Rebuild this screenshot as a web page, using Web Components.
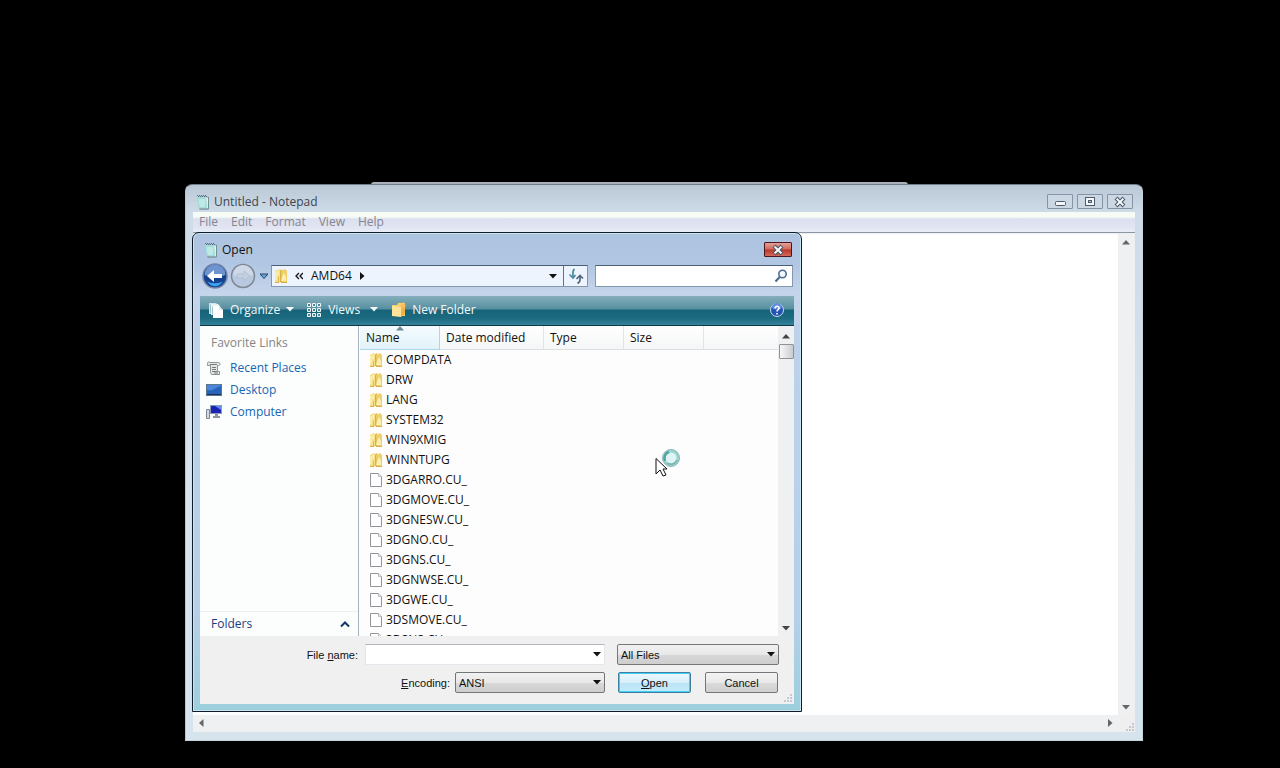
<!DOCTYPE html>
<html lang="en">
<head>
<meta charset="utf-8">
<title>Untitled - Notepad</title>
<style>
  html, body { height: 100%; }
  body { margin: 0; background: #000; font: 12px/16px "Open Sans", "Noto Sans", sans-serif; color: #111; overflow: hidden; }
</style>
</head>
<body>
<desk-top>
  <note-window></note-window>
  <open-dialog></open-dialog>
  <busy-cursor></busy-cursor>
</desk-top>

<script>
const ICONS = {
  notepad: [16, 16, `<path d="M4 3h9.500v12H5z" fill="#dcefee" stroke="#8ba4ab"/><path d="M2 3h9l1 11H4z" fill="#a3dcd8"/><path d="M4 6h6M4 8h6M4 10h6M5 12h5" stroke="#d9f8f4"/><path d="M2 1.500h10M3 2.500h10" stroke="#536f80" stroke-dasharray="1 1"/><path d="M13.500 3v12h-9" fill="none" stroke="#6f9299"/>`],
  folder: [14, 16, `<path d="M1 3l4-2 2 1v12l-3 1-3-1z" fill="#f6e08a"/><path d="M6 3l2-2v13H6z" fill="#d9b04a"/><path d="M7 3l4-2 2 2v11l-5 1z" fill="#f0cf66"/><path d="M8 9l2-4 2 4v4H7z" fill="#fcefb0"/><path d="M2 4v8M4 3v4" stroke="#fff8d0"/><path d="M1 14.500h4M7 14.500h6" stroke="#d8ae4c"/><path d="M4.500 9v5" stroke="#e2b94f"/>`],
  file: [14, 16, `<path d="M1.500 1.500h8l3 3v10h-11z" fill="#fff" stroke="#92959a"/><path d="M9.500 1.500v3h3" fill="#eee" stroke="#b7bbc0"/>`],
  recent: [16, 16, `<path d="M1.500 3.500c0-2 2-2 2-1h9c2 0 2 3 0 3h-1v6h2v3h-8l-1-2v-7h-3z" fill="#e4e7e5" stroke="#8c9590"/><path d="M4 4.500h7M6 7.500h4M6 9.500h4M6 11.500h5M8 13h4" stroke="#737d79"/>`],
  desktop: [16, 16, `<rect x=".5" y="2.500" width="15" height="11" fill="#2763b8" stroke="#5e7790"/><path d="M1 8c5 2 9-3 14-4V3H1z" fill="#4b86da"/><path d="M1 12.500h14" stroke="#1b2c55"/>`],
  computer: [16, 16, `<path d="M.5 5.500h3v9h-3z" fill="#d5d9dc" stroke="#7d878e"/><rect x="4.500" y="1.500" width="11" height="8" fill="#1b22b4" stroke="#8d9db9"/><path d="M9 2h6v4z" fill="#5a8cf0"/><path d="M9 10h3v2h2v2H7v-2h2z" fill="#8e979e"/>`],
  organize: [16, 16, `<path d="M1 1h7l2 2v9H1z" fill="#cfe3e8"/><path d="M3 2h7l2 2v9H3z" fill="#e6f2f4"/><path d="M2.500 2.500v9M4.500 4.500v8" stroke="#a5c6cf"/><path d="M5 4h6l4 4v8H5z" fill="#fff"/><path d="M11 4v4h4" fill="#dbe9ec"/>`],
  views: [16, 16, `<path fill="#4d8495" stroke="#f2f9fa" d="M1.500 1.500h3v3h-3zM6.500 1.500h3v3h-3zM11.500 1.500h3v3h-3zM1.500 6.500h3v3h-3zM6.500 6.500h3v3h-3zM11.500 6.500h3v3h-3zM1.500 11.500h3v3h-3zM6.500 11.500h3v3h-3zM11.500 11.500h3v3h-3z"/>`],
  newfolder: [16, 16, `<path d="M1 3h5l1-2h7v13H1z" fill="#f6d16a"/><path d="M1 4l9 1v10l-9-1z" fill="#ffe398"/><path d="M10 5l4-2v9l-4 3z" fill="#edb548"/><path d="M12 0v7M9 4h6M10 2l4 4M14 2l-4 4" stroke="#ffb95a"/>`],
  help: [16, 16, `<circle cx="8" cy="8" r="6.500" fill="#2453b4" stroke="#c8dcf0"/><path d="M3 6a5 5 0 0 1 10 0c-3 2-7 2-10 0z" fill="#5d8be0"/><path d="M6 6.500c0-3 4.500-2.800 4 0-.2 1.200-2 1.400-2 3M8 11v1.500" fill="none" stroke="#fff" stroke-width="1.600"/>`],
  back: [26, 26, `<circle cx="13" cy="13" r="12" fill="#14408f" stroke="#7484a4" stroke-width="1.500"/><path d="M2.500 12a10.500 10.500 0 0 1 21 0c-6 2-15 2-21 0z" fill="#6e93cf"/><path d="M5 18c4 7 12 7 16 0-4 3-12 3-16 0z" fill="#38a3ee"/><path d="M5 13l7-6v4h8v4h-8v4z" fill="#fff"/>`],
  forward: [26, 26, `<circle cx="13" cy="13" r="11.500" fill="#b8c8de" stroke="#7f8796" stroke-width="1.500"/><path d="M3 12a10 10 0 0 1 20 0c-6 2-14 2-20 0z" fill="#ced8e6"/><path d="M20 13l-6-5v3H7v4h7v3z" fill="#c3d0e2" stroke="#b1c0d3"/>`],
  history: [10, 8, `<path d="M1 2h8L5 6.500z" fill="#6fa3cf" stroke="#1c4672"/>`],
  down: [8, 5, `<path d="M0 0h8L4 4.500z" fill="currentColor"/>`],
  up: [8, 5, `<path d="M0 4.500h8L4 0z" fill="currentColor"/>`],
  left: [5, 8, `<path d="M4.500 0v8L0 4z" fill="currentColor"/>`],
  right: [5, 8, `<path d="M0 0v8l4.500-4z" fill="currentColor"/>`],
  chevrons: [8, 8, `<path d="M4 1L1 4l3 3M8 1L5 4l3 3" fill="none" stroke="#111" stroke-width="1.300"/>`],
  collapse: [10, 8, `<path d="M1 6.500l4-4 4 4" fill="none" stroke="#123a68" stroke-width="2"/>`],
  refresh: [16, 16, `<path d="M6.500 1C4 3 5 5 5 9M1.500 6.500L5 10l2.500-3" fill="none" stroke="#4d8ba0" stroke-width="1.700"/><path d="M9.500 15.500c3-2 2.500-3 2.500-7M8.500 11L12 7.500l3 3" fill="none" stroke="#53677e" stroke-width="1.700"/>`],
  search: [14, 14, `<circle cx="8.500" cy="5" r="3.700" fill="#f3f9fd" stroke="#4d6c92" stroke-width="1.600"/><path d="M5.700 8L1.500 12.500" stroke="#4d6c92" stroke-width="2.200"/>`],
  min: [14, 12, `<rect x="2.500" y="5.500" width="10" height="4" rx="1" fill="#f3f7fb" stroke="#4d5b6b"/>`],
  max: [12, 12, `<rect x="1.500" y="1.500" width="9" height="8" fill="#f3f7fb" stroke="#4d5b6b"/><rect x="4.500" y="4.500" width="3" height="2" fill="#b9c6d5" stroke="#4d5b6b"/>`],
  close: [12, 12, `<path d="M2 2l8 8M10 2l-8 8" stroke="#4d5b6b" stroke-width="4"/><path d="M2.600 2.600l6.800 6.800M9.400 2.600l-6.800 6.800" stroke="#fff" stroke-width="2"/>`],
  grip: [10, 10, `<path d="M7 1h2v2H7zM7 4h2v2H7zM7 7h2v2H7zM4 4h2v2H4zM4 7h2v2H4zM1 7h2v2H1z" fill="#c3c9d3"/>`]
};

function define(name, html, setup) {
  const tpl = document.createElement("template");
  tpl.innerHTML = html;
  customElements.define(name, class extends HTMLElement {
    constructor() {
      super();
      this.attachShadow({ mode: "open" }).append(tpl.content.cloneNode(true));
    }
    connectedCallback() { if (setup) setup(this, this.shadowRoot); }
  });
}

define("ui-icon", `<style>:host{display:inline-flex;flex:none}svg{display:block}</style><span></span>`, (el, root) => {
  const [w, h, body] = ICONS[el.getAttribute("name")];
  root.querySelector("span").innerHTML = `<svg width="${w}" height="${h}" viewBox="0 0 ${w} ${h}" aria-hidden="true">${body}</svg>`;
});

define("scroll-bar", `<style>
  :host{display:flex;flex-direction:column;justify-content:space-between;align-items:center;background:#eff0f1;color:#444;width:16px}
  :host([horizontal]){flex-direction:row;width:auto;height:16px}
  :host([thumb]){box-sizing:border-box;padding-top:2px}
  button{all:unset;display:grid;place-items:center;width:16px;height:16px}
  div{display:flex;flex-direction:column;flex:1}
  i{display:none;box-sizing:border-box;width:15px;height:15px;border:1px solid #8e9196;border-radius:1px;background:linear-gradient(90deg,#f8f8f8,#c9cbce)}
  :host([thumb]) i{display:block}
</style><button aria-label="Scroll back"><ui-icon name="up"></ui-icon></button><div><i></i></div><button aria-label="Scroll forward"><ui-icon name="down"></ui-icon></button>`, (el, root) => {
  if (el.hasAttribute("horizontal")) {
    const [a, b] = root.querySelectorAll("button");
    a.innerHTML = '<ui-icon name="left"></ui-icon>';
    b.innerHTML = '<ui-icon name="right"></ui-icon>';
  }
});

define("desk-top", `<style>
  :host{display:block;position:relative;height:100%;overflow:hidden;background:#000}
  .behind{position:absolute;left:371px;right:372px;top:182px;height:3px;background:#a9b0ba;border-radius:4px 4px 0 0}
</style><div class="behind"></div><slot></slot>`);

define("note-window", `<style>
  :host{position:absolute;left:185px;right:137px;top:184px;bottom:27px;box-sizing:border-box;display:flex;flex-direction:column;padding:0 7px 8px;
    border:1px solid #8c98a6;border-color:#727c89 #c3d4dc #c3d4dc #b9c4d0;border-radius:7px 7px 0 0;background:linear-gradient(#bac8d6,#cfdce8 28px,#d8e3ec 60%,#d5e4ed)}
  header{display:flex;align-items:center;gap:3px;height:27px;padding:6px 2px 0;box-sizing:border-box;color:#3c4550}
  h1{font:inherit;margin:0;flex:1}
  .btns{display:flex;gap:4px;align-self:flex-end;margin-bottom:3px}
  .btns button{box-sizing:border-box;width:26px;height:15px;padding:0;display:grid;place-items:center;background:#cbd7e3;border:1px solid #8593a5;border-radius:1px}
  nav{display:flex;gap:13px;height:20px;padding:0 6px;box-sizing:border-box;background:linear-gradient(#f7fbf5 5px,#dcdff0 7px,#e1e4f1 15px,#e9edf6)}
  nav button{all:unset;align-self:flex-start;margin-top:2px;color:#85858f}
  .client{flex:1;display:grid;grid-template-columns:1fr 17px;grid-template-rows:1fr 17px;border-top:1px solid #8c97a5;background:#efefef;padding:1px 0 0;min-height:0}
  textarea{border:0;margin:0;padding:0;resize:none;outline:0;background:#fff}
  .client>scroll-bar{color:#666}
  .corner{align-self:end;justify-self:end}
</style>
<header><ui-icon name="notepad"></ui-icon><h1>Untitled - Notepad</h1>
<div class="btns"><button aria-label="Minimize"><ui-icon name="min"></ui-icon></button><button aria-label="Maximize"><ui-icon name="max"></ui-icon></button><button aria-label="Close"><ui-icon name="close"></ui-icon></button></div></header>
<nav><button>File</button><button>Edit</button><button>Format</button><button>View</button><button>Help</button></nav>
<div class="client"><textarea aria-label="Document"></textarea><scroll-bar></scroll-bar><scroll-bar horizontal></scroll-bar><ui-icon class="corner" name="grip"></ui-icon></div>`);

define("address-bar", `<style>
  :host{display:flex;align-items:center;height:30px;padding:0 1px 0 2px}
  button{all:unset;display:grid;place-items:center}
  .back,.fwd{width:26px;height:26px}
  .fwd{margin-left:2px}.hist{width:15px}
  .path{flex:1;display:flex;align-items:center;height:22px;box-sizing:border-box;background:#edf4fd;border:1px solid #8397ae;border-top-color:#4a6076}
  .path>.place{margin:0 7px 0 2px}
  .crumb{padding:0 8px}
  .grow{flex:1}
  .drop{width:20px}.ref{width:23px;height:20px;border-left:1px solid #5f7489}
  label{display:flex;align-items:center;margin-left:7px;width:198px;height:22px;box-sizing:border-box;background:#fff;border:1px solid #8397ae;border-top-color:#4a6076;padding-right:4px}
  input{all:unset;flex:1;min-width:0}
</style>
<button class="back" aria-label="Back"><ui-icon name="back"></ui-icon></button><button class="fwd" aria-label="Forward"><ui-icon name="forward"></ui-icon></button><button class="hist" aria-label="Recent pages"><ui-icon name="history"></ui-icon></button>
<div class="path"><ui-icon class="place" name="folder"></ui-icon><ui-icon name="chevrons"></ui-icon><button class="crumb">AMD64</button><ui-icon name="right"></ui-icon><span class="grow"></span><button class="drop" aria-label="Previous locations"><ui-icon name="down"></ui-icon></button><button class="ref" aria-label="Refresh"><ui-icon name="refresh"></ui-icon></button></div>
<label><input type="text" aria-label="Search"><ui-icon name="search"></ui-icon></label>`);

define("command-bar", `<style>
  :host{display:flex;align-items:center;height:30px;box-sizing:border-box;padding:0 9px 2px 8px;color:#f4fafb;border-bottom:1px solid #0c3848;
    background:linear-gradient(#86aebb,#568fa0 13px,#17647a 14px,#1b6a80 22px,#358299)}
  button{all:unset;display:flex;align-items:center;gap:6px}
  .views{margin-left:12px}.new{margin-left:13px;gap:5px}.pick{margin-left:10px}
  .help{margin-left:auto}
</style>
<button><ui-icon name="organize"></ui-icon>Organize<ui-icon name="down"></ui-icon></button>
<button class="views"><ui-icon name="views"></ui-icon>Views</button><button class="pick" aria-label="Choose view"><ui-icon name="down"></ui-icon></button>
<button class="new"><ui-icon name="newfolder"></ui-icon>New Folder</button>
<button class="help" aria-label="Help"><ui-icon name="help"></ui-icon></button>`);

define("favorite-links", `<style>
  :host{display:flex;flex-direction:column;box-sizing:border-box;width:159px;background:#fcfdfd;border-right:1px solid #a9b3bf}
  h2{font:inherit;color:#858585;margin:9px 11px 8px}
  ul{list-style:none;margin:0;padding:0 6px;flex:1}
  li{height:22px}
  a{display:flex;align-items:center;gap:8px;height:18px;color:#1566b4;text-decoration:none}
  .folders{all:unset;display:flex;justify-content:space-between;align-items:center;height:24px;padding:0 8px 0 11px;border-top:1px solid #eceff2;color:#1b3c80}
</style>
<h2>Favorite Links</h2>
<ul><li><a href="#recent"><ui-icon name="recent"></ui-icon>Recent Places</a></li><li><a href="#desktop"><ui-icon name="desktop"></ui-icon>Desktop</a></li><li><a href="#computer"><ui-icon name="computer"></ui-icon>Computer</a></li></ul>
<button class="folders">Folders<ui-icon name="collapse"></ui-icon></button>`);

define("file-list", `<style>
  :host{display:block;flex:1;min-width:0;overflow:hidden;background:#fdfdfd;padding-left:1px}
  table{border-collapse:separate;border-spacing:0;table-layout:fixed;width:100%}
  th{position:relative;height:24px;padding:1px 0 0 6px;box-sizing:border-box;text-align:left;font-weight:400;border-right:1px solid #e2e5e8;border-bottom:1px solid #dcdfe2;background:linear-gradient(#fff,#f5f6f7)}
  th:last-child{border-right:0}
  th.sorted{border-color:#a8d8ea;background:linear-gradient(#f5fbfe,#e2f3fa)}
  th ui-icon{position:absolute;left:36px;top:0;color:#6c8a99}
  td{padding:0 0 0 9px;height:20px}
  td span{display:flex;align-items:center;gap:3px;height:20px}
</style>
<table><colgroup><col style="width:80px"><col style="width:104px"><col style="width:80px"><col style="width:80px"><col></colgroup>
<thead><tr><th class="sorted">Name<ui-icon name="up"></ui-icon></th><th>Date modified</th><th>Type</th><th>Size</th><th></th></tr></thead><tbody></tbody></table>`, (el, root) => {
  const folders = ["COMPDATA", "DRW", "LANG", "SYSTEM32", "WIN9XMIG", "WINNTUPG"];
  const files = ["3DGARRO.CU_", "3DGMOVE.CU_", "3DGNESW.CU_", "3DGNO.CU_", "3DGNS.CU_", "3DGNWSE.CU_", "3DGWE.CU_", "3DSMOVE.CU_", "3DSNS.CU_"];
  const row = (icon) => (name) => `<tr><td colspan="5"><span><ui-icon name="${icon}"></ui-icon>${name}</span></td></tr>`;
  root.querySelector("tbody").innerHTML = folders.map(row("folder")).join("") + files.map(row("file")).join("");
});

define("drop-down", `<style>
  :host{display:grid;height:21px;align-items:center}
  select,ui-icon{grid-area:1/1}
  select{appearance:none;box-sizing:border-box;width:100%;height:21px;margin:0;padding:0 3px;font:inherit;color:#111;border:1px solid #747679;border-radius:2px;background:linear-gradient(#f1f1f1,#e8e8e8 50%,#d8d8d8 51%,#cecece)}
  ui-icon{justify-self:end;margin-right:4px;pointer-events:none}
</style><select></select><ui-icon name="down"></ui-icon>`, (el, root) => {
  const s = root.querySelector("select");
  s.setAttribute("aria-label", el.getAttribute("label"));
  s.innerHTML = `<option>${el.getAttribute("value")}</option>`;
});

define("dialog-form", `<style>
  :host{display:block;background:#f0f0f0;padding:8px 7px 1px 0;font-family:"Liberation Sans",sans-serif;font-size:11px}
  form{display:grid;grid-template-columns:1fr 90px 150px 12px 162px;row-gap:7px;margin-right:8px}
  label{align-self:center;justify-self:end;padding-right:7px}
  .enc{grid-column:1/3;padding-right:5px}
  .name{grid-column:2/4;display:flex;align-items:center;height:21px;box-sizing:border-box;background:#fff;border:1px solid #e3e6ea;border-top-color:#b4b8be}
  .name input{all:unset;flex:1;min-width:0;padding-left:3px}
  .name button{all:unset;padding-right:3px;display:grid}
  drop-down{grid-column:5}
  drop-down.encoding{grid-column:3}
  .actions{grid-column:5;display:flex;justify-content:space-between;padding:0 1px}
  .actions button{box-sizing:border-box;width:73px;height:21px;padding:0;font:inherit;color:#111;border:1px solid #747679;border-radius:2px;background:linear-gradient(#f3f3f3,#e9e9e9 50%,#dadada 51%,#d0d0d0)}
  .actions .ok{border-color:#3c7f9f;box-shadow:inset 0 0 0 1px #43cdf5;background:linear-gradient(#eef8fd,#d8effa 50%,#b9e3f7 51%,#c3ecfb)}
  u{text-underline-offset:1px}
  .grip{display:flex;justify-content:flex-end;height:10px;margin-right:-6px}
</style>
<form onsubmit="return false">
<label for="fn">File <u>n</u>ame:</label><div class="name"><input id="fn" type="text"><button type="button" aria-label="Recent names"><ui-icon name="down"></ui-icon></button></div><drop-down label="File type" value="All Files"></drop-down>
<label class="enc"><u>E</u>ncoding:</label><drop-down class="encoding" label="Encoding" value="ANSI"></drop-down>
<div class="actions"><button class="ok"><u>O</u>pen</button><button type="button">Cancel</button></div>
</form><div class="grip"><ui-icon name="grip"></ui-icon></div>`);

define("open-dialog", `<style>
  :host{position:absolute;left:192px;top:232px;width:610px;box-sizing:border-box;padding:0 7px 7px;border:1px solid #101c28;border-radius:7px 7px 0 0;box-shadow:inset 0 0 0 1px #c9e4f2;
    background:linear-gradient(#adc3df,#b0c6e2 30px,#c5d5ea 60px,#bdd1ea 100px,#b5d0e9 80%,#9ccfdc)}
  header{display:flex;align-items:center;gap:3px;height:28px;padding:5px 2px 0 3px;box-sizing:border-box}
  h1{font:inherit;margin:0;flex:1}
  .x{box-sizing:border-box;width:28px;height:15px;padding:0;display:grid;place-items:center;border:1px solid #4b1620;border-radius:1px;background:linear-gradient(#e3a095,#d0685c 48%,#b9352a 52%,#d5695a)}
  .body{display:flex;height:310px}
  command-bar{margin-top:5px}
</style>
<header><ui-icon name="notepad"></ui-icon><h1>Open</h1><button class="x" aria-label="Close"><ui-icon name="close"></ui-icon></button></header>
<address-bar></address-bar>
<command-bar></command-bar>
<div class="body"><favorite-links></favorite-links><file-list></file-list><scroll-bar thumb></scroll-bar></div>
<dialog-form></dialog-form>`);

define("busy-cursor", `<style>:host{position:absolute;left:655px;top:448px;display:block;pointer-events:none}svg{display:block}</style>
<svg width="28" height="30" viewBox="0 0 28 30" aria-hidden="true"><path d="M1 10.500v15.500l4-4 3 6 3-1-3-6h4z" fill="#fff" stroke="#111"/><circle cx="16" cy="10" r="7" fill="#e0f4f6" stroke="#9cd3cf" stroke-width="3"/><path d="M10 13a6.500 6.500 0 0 1 4-9" fill="none" stroke="#4da6a0" stroke-width="2.500"/><path d="M12 15a6.500 6.500 0 0 0 10-3" fill="none" stroke="#79b9b4" stroke-width="2"/><circle cx="16" cy="10" r="8.500" fill="none" stroke="#8fb6ba"/></svg>`);
</script>
</body>
</html>
